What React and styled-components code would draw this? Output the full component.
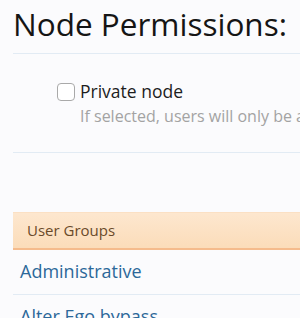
import React from "react";
import styled, { createGlobalStyle } from "styled-components";

const Global = createGlobalStyle`
  html, body { margin: 0; padding: 0; background: #fbfbfd; overflow: hidden; }
  body { font-family: "Open Sans", "Noto Sans", sans-serif; }
`;

const Page = styled.div`
  padding-left: 13px;
  width: 287px;
  overflow: hidden;
`;

const Heading = styled.h1`
  margin: 0;
  padding-top: 4px;
  height: 49px;
  font-size: 31.5px;
  line-height: 40px;
  font-weight: 400;
  color: #151515;
  border-bottom: 1px solid #e2ebf4;
  white-space: nowrap;
`;

const Section = styled.div`
  padding: 25px 0 26px 44px;
  border-bottom: 1px solid #e2ebf4;
`;

const OptionRow = styled.label`
  display: grid;
  grid-template-columns: 18px 1fr;
  column-gap: 5px;
`;

const Box = styled.span`
  display: block;
  width: 16px;
  height: 16px;
  margin-top: 4px;
  border: 1px solid #a9a9a9;
  border-radius: 4px;
  background: #fff;
  box-sizing: content-box;
`;

const Label = styled.span`
  font-size: 17.5px;
  line-height: 24px;
  color: #1d1d1d;
`;

const Hint = styled.div`
  grid-column: 2;
  margin-top: 3px;
  font-size: 16px;
  line-height: 20px;
  color: #a3a3a3;
  white-space: nowrap;
`;

const List = styled.div`
  margin-top: 60px;
`;

const ListHeader = styled.div`
  padding: 7px 0 8px 14px;
  font-size: 15px;
  line-height: 20px;
  color: #6a4a2a;
  background: linear-gradient(#fde7cf, #fbdcb9);
  border-top: 1px solid #fbe0c4;
  border-bottom: 2px solid #f5bb8c;
  margin-top: -1px;
`;

const ListRow = styled.div`
  padding: 9px 0 11px 7px;
  font-size: 18px;
  line-height: 24px;
  color: #2c6899;
  border-bottom: 1px solid #e2ebf4;
  white-space: nowrap;
`;

export default function App() {
  return (
    <>
      <Global />
      <Page>
        <Heading>Node Permissions:</Heading>
        <Section>
          <OptionRow>
            <Box />
            <Label>Private node</Label>
            <Hint>If selected, users will only be able to see this node if granted permission.</Hint>
          </OptionRow>
        </Section>
        <List>
          <ListHeader>User Groups</ListHeader>
          <ListRow>Administrative</ListRow>
          <ListRow>Alter Ego bypass</ListRow>
        </List>
      </Page>
    </>
  );
}
